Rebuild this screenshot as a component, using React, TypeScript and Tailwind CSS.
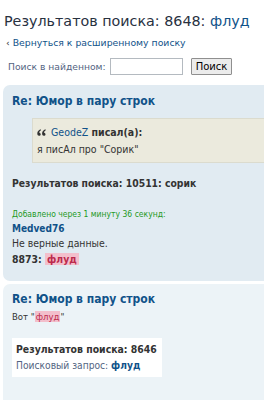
import React from "react";

const Hl = ({ children }: { children: React.ReactNode }) => (
  <span className="bg-[#f3bfcc] text-[#bc2a4d] px-[2px]">{children}</span>
);

const cond = { fontFamily: '"DejaVu Sans Condensed", "DejaVu Sans", Verdana, sans-serif' };

const QuoteIcon = () => (
  <svg width="9" height="7" viewBox="0 0 9 7" className="mr-[5px] shrink-0">
    <path d="M3.6 0.3 C1.6 1 0.3 2.5 0.3 4.6 C0.3 6 1 6.8 2 6.8 C3 6.8 3.7 6.1 3.7 5.2 C3.7 4.3 3 3.7 2.2 3.7 C2.3 2.6 3 1.7 4 1.2 Z" fill="#333" />
    <path d="M8.4 0.3 C6.4 1 5.1 2.5 5.1 4.6 C5.1 6 5.8 6.8 6.8 6.8 C7.8 6.8 8.5 6.1 8.5 5.2 C8.5 4.3 7.8 3.7 7 3.7 C7.1 2.6 7.8 1.7 8.8 1.2 Z" fill="#333" />
  </svg>
);

export default function App() {
  return (
    <div className="w-[264px] h-[400px] overflow-hidden bg-white text-[#333333]" style={{ fontFamily: '"DejaVu Sans", Verdana, sans-serif' }}>
      <div className="pt-[11px] pl-[4px]">
        <h2 className="text-[14.3px] leading-[20px] text-[#28313f] font-normal whitespace-nowrap">
          Результатов поиска: 8648: <span className="text-[#105289]">флуд</span>
        </h2>
        <div className="mt-[5px] pl-[2px] text-[9.3px] leading-[13px] text-[#105289] whitespace-nowrap">
          <span className="text-[#333]">‹</span> Вернуться к расширенному поиску
        </div>
        <div className="mt-[9px] pl-[4px] flex items-center text-[9.2px] text-[#536482]">
          <span className="whitespace-nowrap">Поиск в найденном:</span>
          <input className="ml-[4px] w-[73px] h-[17px] border border-[#b4bac0] bg-white" />
          <button className="ml-[8px] h-[17px] px-[4px] border border-[#8f8f8f] bg-[#ececec] text-[10px] text-black leading-none rounded-[1px]">
            Поиск
          </button>
        </div>
      </div>

      <div style={cond} className="mt-[10px] ml-[3px] mr-[-20px] rounded-[7px] bg-[#e1ebf2] pl-[9px] pt-[7px] pb-[13px]">
        <div className="text-[12px] leading-[18px] font-bold text-[#105289] whitespace-nowrap">Re: Юмор в пару строк</div>
        <div className="mt-[8px] ml-[20px] bg-[#ebeadd] border border-[#dbdbce] pl-[4px] pt-[5px] pb-[4px] text-[10.5px] leading-[17px]">
          <div className="font-bold whitespace-nowrap flex items-center">
            <QuoteIcon />
            <span className="text-[#105289] font-normal">GeodeZ</span>&nbsp;писал(а):
          </div>
          <div className="whitespace-nowrap">я писАл про "Сорик"</div>
        </div>
        <div className="mt-[13px] text-[10.3px] leading-[15px] font-bold whitespace-nowrap">Результатов поиска: 10511: сорик</div>
        <div className="mt-[17px] text-[8.5px] leading-[12px] text-[#1f9a1f] whitespace-nowrap">Добавлено через 1 минуту 36 секунд:</div>
        <div className="mt-[1px] text-[10px] leading-[15px] font-bold text-[#105289]">Medved76</div>
        <div className="text-[10.4px] leading-[15px] whitespace-nowrap">Не верные данные.</div>
        <div className="text-[10.4px] leading-[17px] font-bold whitespace-nowrap">8873: <Hl>флуд</Hl></div>
      </div>

      <div style={cond} className="mt-[3px] ml-[3px] mr-[-20px] rounded-[7px] bg-[#ecf3f7] pl-[9px] pt-[6px] pb-[30px]">
        <div className="text-[12px] leading-[18px] font-bold text-[#105289] whitespace-nowrap">Re: Юмор в пару строк</div>
        <div className="mt-[1px] text-[9.5px] leading-[16px] whitespace-nowrap">
          Вот "<span className="bg-[#f3bfcc] text-[#bc2a4d] px-[1px]">флуд</span>"
        </div>
        <div className="mt-[13px] w-[150px] bg-white pl-[4px] pt-[3px] pb-[4px]">
          <div className="text-[10.4px] leading-[16px] font-bold text-[#333] whitespace-nowrap">Результатов поиска: 8646</div>
          <div className="mt-[2px] text-[10.2px] leading-[14px] text-[#536482] whitespace-nowrap">
            Поисковый запрос: <span className="font-bold text-[#105289]">флуд</span>
          </div>
        </div>
      </div>
    </div>
  );
}
